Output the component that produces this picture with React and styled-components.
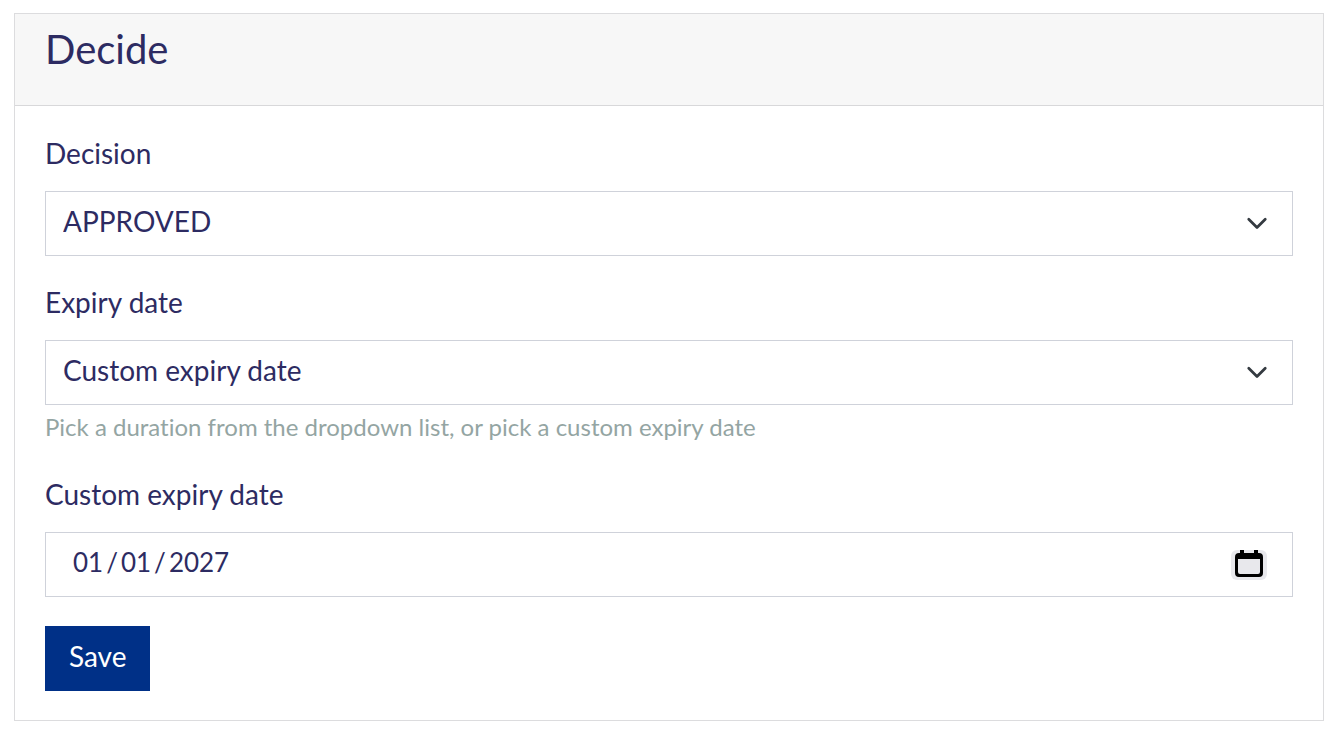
import { useState } from "react"
import styled, { createGlobalStyle } from "styled-components"

const GlobalStyle = createGlobalStyle`
* {
  box-sizing: border-box;
}
body {
  margin: 0;
  background: #fff;
  color: #2d2b62;
  font-family: Lato, "Open Sans", sans-serif;
  font-size: 28px;
  font-variant-ligatures: none;
  line-height: 35px;
}
`
const Page = styled.main`
padding: 13px 16px 15px 14px;
`
const Card = styled.section`
border: 1px solid #dcdcde;
`
const CardHeader = styled.header`
padding: 11px 30px 31px;
background: #f7f7f7;
border-bottom: 1px solid #d8d8da;
`
const Title = styled.h2`
margin: 0;
font-size: 40px;
font-weight: 400;
line-height: 49px;
`
const Form = styled.form`
padding: 30px 30px 29px;
`
const Field = styled.div`
margin-bottom: 29px;
`
const Label = styled.label`
display: block;
margin-bottom: 20px;
`
const Control = styled.div`
position: relative;
`
const Select = styled.select`
display: block;
width: 100%;
height: 65px;
padding: 0 60px 4px 17px;
border: 1px solid #cfd2da;
border-radius: 0;
background: #fff;
color: inherit;
font: inherit;
appearance: none;
`
const DateInput = styled.input`
display: block;
width: 100%;
height: 65px;
padding: 0 26px 4px;
border: 1px solid #cfd2da;
border-radius: 0;
background: #fff;
color: inherit;
font: inherit;
font-size: 26px;

&::-webkit-datetime-edit-text {
  padding: 0 2px;
}
&::-webkit-calendar-picker-indicator {
  width: 36px;
  height: 30px;
  padding: 0;
  opacity: 0;
}
`
const ControlIcon = styled.span`
position: absolute;
top: 0;
bottom: 0;
right: ${props => props.$right};
display: flex;
align-items: center;
pointer-events: none;
`
const Help = styled.p`
margin: 6px 0 0;
padding-bottom: 6px;
color: #94a5a3;
font-size: 24px;
line-height: 31px;
`
const SaveButton = styled.button`
display: block;
height: 65px;
padding: 0 24px 4px;
border: 0;
background: #003087;
color: #fff;
font: inherit;
cursor: pointer;
`

function Chevron() {
    return (
        <svg width="22" height="22" viewBox="0 0 16 16" fill="none" aria-hidden="true">
            <path d="m2 4.5 6 6 6-6" stroke="#343a40" strokeWidth="2" strokeLinecap="round" strokeLinejoin="round" />
        </svg>
    )
}

function Calendar() {
    return (
        <svg width="36" height="30" viewBox="0 0 36 30" aria-hidden="true">
            <rect width="36" height="30" rx="6" fill="#e8e8ec" />
            <path d="M9 0h4v3h10V0h4v3h1a4 4 0 0 1 4 4v16a4 4 0 0 1-4 4H8a4 4 0 0 1-4-4V7a4 4 0 0 1 4-4h1z" />
            <path d="M7 9h22v13a2 2 0 0 1-2 2H9a2 2 0 0 1-2-2z" fill="#e8e8ec" />
        </svg>
    )
}

function App() {
    const [decision, setDecision] = useState("APPROVED")
    const [expiry, setExpiry] = useState("custom")
    const [date, setDate] = useState("2027-01-01")

    return (
        <Page>
            <GlobalStyle />
            <Card>
                <CardHeader>
                    <Title>Decide</Title>
                </CardHeader>
                <Form onSubmit={ev => ev.preventDefault()}>
                    <Field>
                        <Label htmlFor="decision">Decision</Label>
                        <Control>
                            <Select id="decision" value={decision} onChange={ev => setDecision(ev.target.value)}>
                                <option value="APPROVED">APPROVED</option>
                            </Select>
                            <ControlIcon $right="25px"><Chevron /></ControlIcon>
                        </Control>
                    </Field>
                    <Field>
                        <Label htmlFor="expiry">Expiry date</Label>
                        <Control>
                            <Select id="expiry" aria-describedby="expiry-help" value={expiry} onChange={ev => setExpiry(ev.target.value)}>
                                <option value="custom">Custom expiry date</option>
                            </Select>
                            <ControlIcon $right="25px"><Chevron /></ControlIcon>
                        </Control>
                        <Help id="expiry-help">Pick a duration from the dropdown list, or pick a custom expiry date</Help>
                    </Field>
                    <Field>
                        <Label htmlFor="custom-date">Custom expiry date</Label>
                        <Control>
                            <DateInput id="custom-date" type="date" value={date} onChange={ev => setDate(ev.target.value)} />
                            <ControlIcon $right="26px"><Calendar /></ControlIcon>
                        </Control>
                    </Field>
                    <SaveButton type="submit">Save</SaveButton>
                </Form>
            </Card>
        </Page>
    )
}

export default App
